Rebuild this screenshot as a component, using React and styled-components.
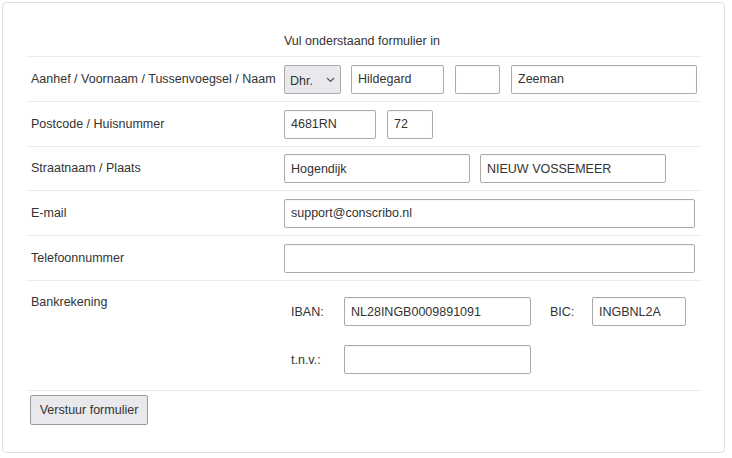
import React from "react";
import styled, { createGlobalStyle } from "styled-components";

const Global = createGlobalStyle`
  html, body { margin: 0; padding: 0; background: #fff; }
  body { font-family: "Liberation Sans", Arial, sans-serif; font-size: 12.5px; color: #333; }
  * { box-sizing: border-box; }
`;

const Card = styled.div`
  margin: 2px;
  width: 723px;
  height: 451px;
  border: 1px solid #e0e0e0;
  border-radius: 4px;
  padding: 23px 22px 0 23px;
  background: #fff;
`;

const Header = styled.div`
  height: 30px;
  display: flex;
  align-items: center;
  padding-left: 258px;
  padding-bottom: 1px;
`;

const Row = styled.div`
  display: grid;
  grid-template-columns: 258px 1fr;
  border-top: 1px solid #ececec;
  height: ${(p) => p.$h || 45}px;
  align-items: ${(p) => (p.$top ? "start" : "center")};
`;

const Label = styled.div`
  padding-left: 5px;
  padding-top: ${(p) => p.$pt || 0}px;
  line-height: 15px;
  white-space: nowrap;
`;

const Fields = styled.div`
  display: flex;
  align-items: center;
  gap: ${(p) => p.$gap || 10}px;
`;

const Input = styled.input`
  width: ${(p) => p.$w}px;
  height: 29px;
  margin-right: ${(p) => p.$mr || 0}px;
  border: 1px solid #ababab;
  border-radius: 2px;
  padding: 0 6px;
  font-family: inherit;
  font-size: 12.5px;
  color: #333;
  background: #fff;
  box-shadow: inset 0 1px 1px rgba(0, 0, 0, 0.04);
  outline: none;
`;

const SelectWrap = styled.div`
  position: relative;
  width: 57px;
  height: 29px;
`;

const Select = styled.select`
  appearance: none;
  width: 100%;
  height: 100%;
  border: 1px solid #ababab;
  border-radius: 2px;
  background: #e9e9ed;
  padding: 3px 0 0 5px;
  font-family: inherit;
  font-size: 12.5px;
  color: #333;
  outline: none;
`;

const Chevron = styled.svg`
  position: absolute;
  right: 6px;
  top: 12px;
  pointer-events: none;
`;

const BankGrid = styled.div`
  display: grid;
  grid-template-columns: 60px 187px 19px 42px 94px;
  grid-template-rows: 29px 29px;
  row-gap: 19px;
  align-items: center;
  padding-top: 16px;
`;

const BankLabel = styled.div`
  padding-left: ${(p) => p.$pl || 0}px;
  grid-column: ${(p) => p.$col};
`;

const ButtonRow = styled.div`
  border-top: 1px solid #ececec;
  padding: 4px 0 0 4px;
`;

const Button = styled.button`
  height: 30px;
  width: 118px;
  background: #e9e9ed;
  border: 1px solid #9a9a9a;
  border-radius: 2px;
  font-family: inherit;
  font-size: 12.5px;
  color: #333;
  padding: 0;
`;

export default function App() {
  return (
    <>
      <Global />
      <Card>
        <Header>Vul onderstaand formulier in</Header>
        <Row>
          <Label>Aanhef / Voornaam / Tussenvoegsel / Naam</Label>
          <Fields $gap={10}>
            <SelectWrap>
              <Select defaultValue="Dhr.">
                <option>Dhr.</option>
                <option>Mevr.</option>
              </Select>
              <Chevron width="9" height="6" viewBox="0 0 9 6">
                <path d="M1 1 L4.5 4.5 L8 1" fill="none" stroke="#555" strokeWidth="1.2" />
              </Chevron>
            </SelectWrap>
            <Input $w={93} $mr={1} defaultValue="Hildegard" />
            <Input $w={45} $mr={1} defaultValue="" />
            <Input $w={186} defaultValue="Zeeman" />
          </Fields>
        </Row>
        <Row>
          <Label>Postcode / Huisnummer</Label>
          <Fields $gap={11}>
            <Input $w={92} defaultValue="4681RN" />
            <Input $w={46} defaultValue="72" />
          </Fields>
        </Row>
        <Row $h={44}>
          <Label>Straatnaam / Plaats</Label>
          <Fields $gap={10}>
            <Input $w={186} defaultValue="Hogendijk" />
            <Input $w={186} defaultValue="NIEUW VOSSEMEER" />
          </Fields>
        </Row>
        <Row>
          <Label>E-mail</Label>
          <Fields>
            <Input $w={411} defaultValue="support@conscribo.nl" />
          </Fields>
        </Row>
        <Row>
          <Label>Telefoonnummer</Label>
          <Fields>
            <Input $w={411} defaultValue="" />
          </Fields>
        </Row>
        <Row $h={110} $top>
          <Label $pt={14}>Bankrekening</Label>
          <BankGrid>
            <BankLabel $pl={7} $col="1">IBAN:</BankLabel>
            <Input $w={187} defaultValue="NL28INGB0009891091" />
            <BankLabel $col="4">BIC:</BankLabel>
            <Input $w={94} defaultValue="INGBNL2A" />
            <BankLabel $pl={7} $col="1">t.n.v.:</BankLabel>
            <Input $w={187} defaultValue="" />
          </BankGrid>
        </Row>
        <ButtonRow>
          <Button>Verstuur formulier</Button>
        </ButtonRow>
      </Card>
    </>
  );
}
